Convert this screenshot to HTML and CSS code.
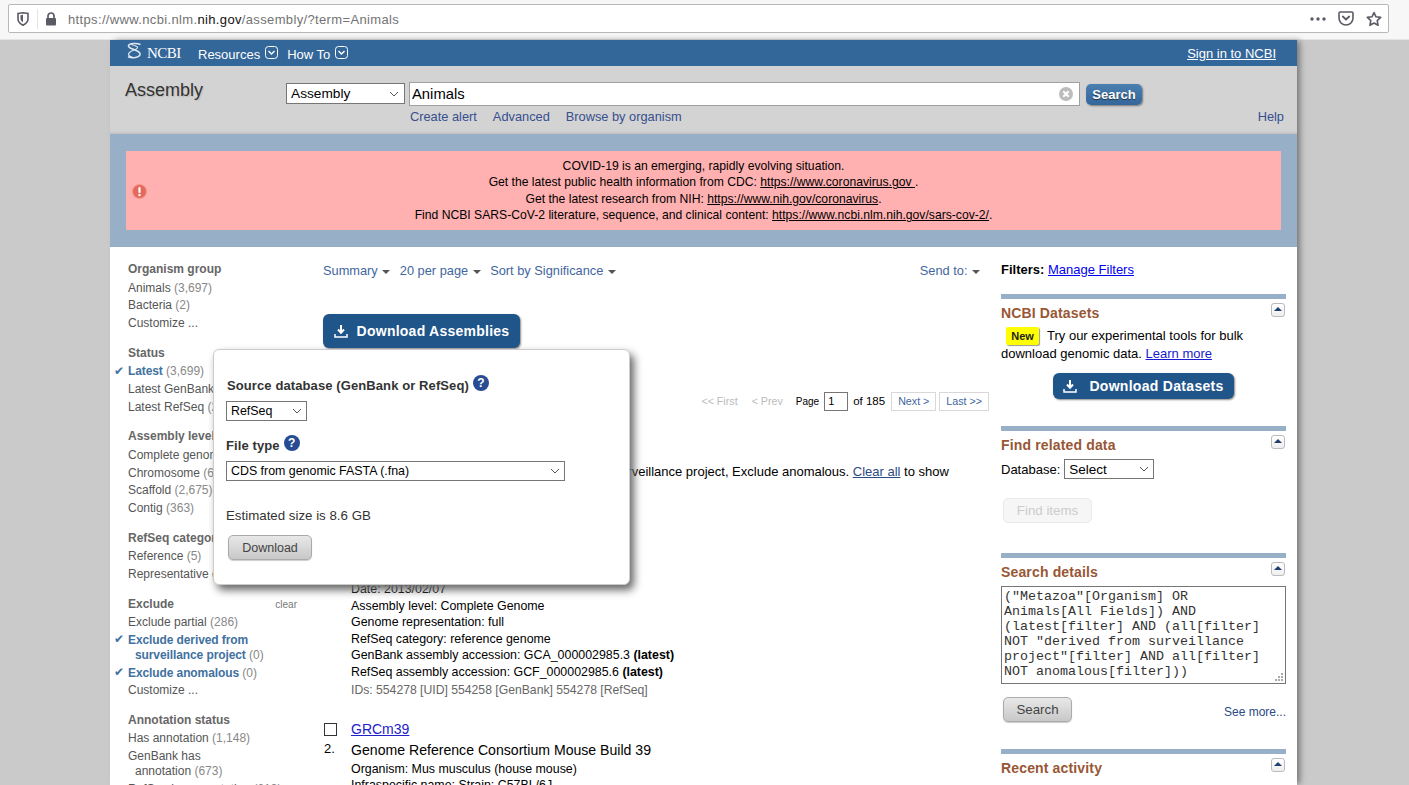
FILE: index.html
```html
<!DOCTYPE html>
<html lang="en">
<head>
    <meta charset="UTF-8">
    <meta name="viewport" content="width=device-width, initial-scale=1.0">
    <title>Assembly - NCBI</title>
    <link rel="stylesheet" href="styles.css">
</head>
<body>

    <!-- Browser chrome -->
    <div class="browser-bar">
        <div class="url-box">
            <svg class="shield" width="12" height="14" viewBox="0 0 12 14"><path d="M1 1.500 6 .8l5 .7v5.200c0 3.200-2.500 5.300-5 6.500C3.500 12 1 9.900 1 6.700z" fill="none" stroke="#5b5b66" stroke-width="1.600"/><path d="M3.500 3.200 6 2.800v7.400C4.500 9.400 3.500 8.200 3.500 6.500z" fill="#5b5b66"/></svg>
            <span class="url-sep"></span>
            <svg class="lock" width="12" height="14" viewBox="0 0 12 14"><path d="M3 6V4a3 3 0 0 1 6 0v2" fill="none" stroke="#5b5b66" stroke-width="1.700"/><rect x="1" y="6" width="10" height="7.500" rx="1" fill="#5b5b66"/></svg>
            <span class="url-text">https://www.ncbi.nlm.<b>nih.gov</b>/assembly/?term=Animals</span>
            <span class="url-actions">
                <svg width="16" height="4" viewBox="0 0 16 4"><circle cx="2" cy="2" r="1.700" fill="#5b5b66"/><circle cx="8" cy="2" r="1.700" fill="#5b5b66"/><circle cx="14" cy="2" r="1.700" fill="#5b5b66"/></svg>
                <svg width="16" height="15" viewBox="0 0 16 15"><path d="M1 2.200C1 1.500 1.500 1 2.200 1h11.600c.7 0 1.200.5 1.200 1.200V7a7 7 0 0 1-14 0z" fill="none" stroke="#5b5b66" stroke-width="1.600"/><path d="M4.800 5.500 8 8.500l3.200-3" fill="none" stroke="#5b5b66" stroke-width="1.800" stroke-linecap="round"/></svg>
                <svg width="16" height="16" viewBox="0 0 16 16"><path d="M8 1.500l2 4.300 4.700.6-3.500 3.200.9 4.700L8 12l-4.100 2.300.9-4.700-3.500-3.200 4.700-.6z" fill="none" stroke="#5b5b66" stroke-width="1.600" stroke-linejoin="round"/></svg>
            </span>
        </div>
    </div>

    <div class="page">

        <!-- NCBI top bar -->
        <header class="ncbi-bar">
            <a class="ncbi-logo" href="#">
                <svg width="17" height="19" viewBox="0 0 17 19"><path d="M14.500 2.500C11 .8 3.500 1 2.500 3.500c-.8 2.200 3.500 3.300 6 4.300 3 1.200 6.500 2.400 5.500 5-1 2.800-7.500 4-12 2" fill="none" stroke="#dfe8f2" stroke-width="1.500"/><path d="M5 2.500c2.500.7 6 1.500 6.500 2.700.4 1-1.500 2-3.500 2.800-2.500 1-6 2.400-5.500 4.700.3 1.300 2 2.200 4.500 2.800" fill="none" stroke="#dfe8f2" stroke-width="1.100"/></svg>
                <span>NCBI</span>
            </a>
            <a class="ncbi-menu" href="#"><span>Resources</span> <svg width="13" height="13" viewBox="0 0 13 13"><rect x=".5" y=".5" width="12" height="12" rx="3" fill="none" stroke="#fff"/><path d="M3.500 5 6.500 8l3-3" fill="none" stroke="#fff" stroke-width="1.400"/></svg></a>
            <a class="ncbi-menu" href="#"><span>How To</span> <svg width="13" height="13" viewBox="0 0 13 13"><rect x=".5" y=".5" width="12" height="12" rx="3" fill="none" stroke="#fff"/><path d="M3.500 5 6.500 8l3-3" fill="none" stroke="#fff" stroke-width="1.400"/></svg></a>
            <a class="sign-in" href="#">Sign in to NCBI</a>
        </header>

        <!-- Search bar -->
        <div class="search-bar">
            <div class="search-row">
                <div class="db-title">Assembly</div>
                <select class="db-select"><option>Assembly</option></select>
                <div class="term-box">
                    <input class="term-input" type="text" value="Animals">
                    <svg class="term-clear" width="14" height="14" viewBox="0 0 14 14"><circle cx="7" cy="7" r="7" fill="#bcbcbc"/><path d="M4.300 4.300l5.400 5.400M9.700 4.300l-5.400 5.400" stroke="#fff" stroke-width="2"/></svg>
                </div>
                <button class="search-button">Search</button>
            </div>
            <div class="search-links">
                <a href="#">Create alert</a>
                <a href="#">Advanced</a>
                <a href="#">Browse by organism</a>
                <a class="help-link" href="#">Help</a>
            </div>
        </div>

        <!-- COVID banner -->
        <div class="banner">
            <div class="alert">
                <svg class="alert-icon" width="15" height="15" viewBox="0 0 15 15"><circle cx="7.500" cy="7.500" r="7" fill="#e5685c" stroke="#f29a8e"/><rect x="6.400" y="3" width="2.200" height="6" rx="1" fill="#fff"/><circle cx="7.500" cy="11" r="1.200" fill="#fff"/></svg>
                <p>COVID-19 is an emerging, rapidly evolving situation.</p>
                <p>Get the latest public health information from CDC: <a href="#">https://www.coronavirus.gov </a>.</p>
                <p>Get the latest research from NIH: <a href="#">https://www.nih.gov/coronavirus</a>.</p>
                <p>Find NCBI SARS-CoV-2 literature, sequence, and clinical content: <a href="#">https://www.ncbi.nlm.nih.gov/sars-cov-2/</a>.</p>
            </div>
        </div>

        <main class="content">

            <!-- Left facets -->
            <aside class="facets">
                <div class="facet-group">
                    <h3>Organism group</h3>
                    <ul>
                        <li>Animals <span>(3,697)</span></li>
                        <li>Bacteria <span>(2)</span></li>
                        <li>Customize ...</li>
                    </ul>
                </div>
                <div class="facet-group">
                    <h3>Status</h3>
                    <ul>
                        <li class="on"><b>Latest</b> <span>(3,699)</span></li>
                        <li>Latest GenBank <span>(3,414)</span></li>
                        <li>Latest RefSeq <span>(285)</span></li>
                    </ul>
                </div>
                <div class="facet-group">
                    <h3>Assembly level</h3>
                    <ul>
                        <li>Complete genome <span>(30)</span></li>
                        <li>Chromosome <span>(631)</span></li>
                        <li>Scaffold <span>(2,675)</span></li>
                        <li>Contig <span>(363)</span></li>
                    </ul>
                </div>
                <div class="facet-group">
                    <h3>RefSeq category</h3>
                    <ul>
                        <li>Reference <span>(5)</span></li>
                        <li>Representative genome <span>(280)</span></li>
                    </ul>
                </div>
                <div class="facet-group">
                    <h3>Exclude <a class="facet-clear" href="#">clear</a></h3>
                    <ul>
                        <li>Exclude partial <span>(286)</span></li>
                        <li class="on wrap"><b>Exclude derived from<br>surveillance project</b> <span>(0)</span></li>
                        <li class="on"><b>Exclude anomalous</b> <span>(0)</span></li>
                        <li>Customize ...</li>
                    </ul>
                </div>
                <div class="facet-group">
                    <h3>Annotation status</h3>
                    <ul>
                        <li>Has annotation <span>(1,148)</span></li>
                        <li class="wrap">GenBank has<br>annotation <span>(673)</span></li>
                        <li>RefSeq has annotation <span>(213)</span></li>
                    </ul>
                </div>
            </aside>

            <!-- Results -->
            <section class="results">
                <div class="tool-row">
                    <a href="#">Summary <i class="caret"></i></a>
                    <a href="#">20 per page <i class="caret"></i></a>
                    <a href="#">Sort by Significance <i class="caret"></i></a>
                    <a class="send-to" href="#">Send to: <i class="caret"></i></a>
                </div>

                <button class="download-button big">
                    <svg width="14" height="14" viewBox="0 0 14 14"><path d="M7 1v7M4 5.500 7 8.800l3-3.300" fill="none" stroke="#fff" stroke-width="2"/><path d="M1 10v3h12v-3" fill="none" stroke="#fff" stroke-width="1.500"/></svg>
                    Download Assemblies
                </button>

                <div class="pager">
                    <span class="off">&lt;&lt; First</span>
                    <span class="off prev">&lt; Prev</span>
                    <span class="page-label">Page</span>
                    <input class="page-input" type="text" value="1">
                    <span class="page-count">of 185</span>
                    <a class="page-link" href="#">Next &gt;</a>
                    <a class="page-link" href="#">Last &gt;&gt;</a>
                </div>

                <p class="filter-msg">Filters activated: Latest, Exclude derived from surveillance project, Exclude anomalous. <a href="#">Clear all</a> to show 3,699 items.</p>

                <div class="result first">
                    <div class="result-num"><input type="checkbox"><span>1.</span></div>
                    <div class="result-body">
                        <a class="result-title" href="#">WBcel235</a>
                        <div class="result-desc">Genome assembly WBcel235</div>
                        <p>Organism: Caenorhabditis elegans</p>
                        <p>Submitter: C. elegans Sequencing Consortium</p>
                        <p>Date: 2013/02/07</p>
                        <p>Assembly level: Complete Genome</p>
                        <p>Genome representation: full</p>
                        <p>RefSeq category: reference genome</p>
                        <p>GenBank assembly accession: GCA_000002985.3 <b>(latest)</b></p>
                        <p>RefSeq assembly accession: GCF_000002985.6 <b>(latest)</b></p>
                        <p class="result-ids">IDs: 554278 [UID] 554258 [GenBank] 554278 [RefSeq]</p>
                    </div>
                </div>

                <div class="result">
                    <div class="result-num"><input type="checkbox"><span>2.</span></div>
                    <div class="result-body">
                        <a class="result-title" href="#">GRCm39</a>
                        <div class="result-desc">Genome Reference Consortium Mouse Build 39</div>
                        <p>Organism: Mus musculus (house mouse)</p>
                        <p>Infraspecific name: Strain: C57BL/6J</p>
                    </div>
                </div>

                <!-- Download popup -->
                <div class="popup">
                    <div class="popup-label first-label">Source database (GenBank or RefSeq) <i class="help-dot">?</i></div>
                    <select class="popup-select short"><option>RefSeq</option></select>
                    <div class="popup-label">File type <i class="help-dot">?</i></div>
                    <select class="popup-select wide"><option>CDS from genomic FASTA (.fna)</option></select>
                    <p class="popup-size">Estimated size is 8.6 GB</p>
                    <button class="gray-button popup-download">Download</button>
                </div>
            </section>

            <!-- Right column -->
            <aside class="sidebar">
                <div class="filters-line"><b>Filters:</b> <a href="#">Manage Filters</a></div>

                <div class="portlet">
                    <div class="portlet-head"><h2>NCBI Datasets</h2><span class="collapse"></span></div>
                    <p class="datasets-text"><span class="new-badge">New</span>Try our experimental tools for bulk download genomic data. <a href="#">Learn more</a></p>
                    <button class="download-button small">
                        <svg width="14" height="14" viewBox="0 0 14 14"><path d="M7 1v7M4 5.500 7 8.800l3-3.300" fill="none" stroke="#fff" stroke-width="2"/><path d="M1 10v3h12v-3" fill="none" stroke="#fff" stroke-width="1.500"/></svg>
                        Download Datasets
                    </button>
                </div>

                <div class="portlet related">
                    <div class="portlet-head"><h2>Find related data</h2><span class="collapse"></span></div>
                    <div class="db-row">Database: <select class="related-select"><option>Select</option></select></div>
                    <button class="find-items" disabled>Find items</button>
                </div>

                <div class="portlet details">
                    <div class="portlet-head"><h2>Search details</h2><span class="collapse"></span></div>
                    <textarea class="details-box" spellcheck="false">("Metazoa"[Organism] OR Animals[All Fields]) AND (latest[filter] AND (all[filter] NOT "derived from surveillance project"[filter] AND all[filter] NOT anomalous[filter]))</textarea>
                    <div class="details-foot">
                        <button class="gray-button details-search">Search</button>
                        <a href="#">See more...</a>
                    </div>
                </div>

                <div class="portlet recent">
                    <div class="portlet-head"><h2>Recent activity</h2><span class="collapse"></span></div>
                </div>
            </aside>
        </main>
    </div>

</body>
</html>
```

FILE: styles.css
```css
html, body {
    height: 785px;
    overflow: hidden;
}
body {
    margin: 0;
    background-color: #cacaca;
    font-family: "Liberation Sans", Arial, sans-serif;
    font-size: 12px;
    color: #000;
}
p, h2, h3, ul {
    margin: 0;
    padding: 0;
}
select {
    appearance: none;
    padding: 0 0 0 4px;
    font-family: inherit;
    color: #000;
    background-color: #fff;
    background-image: url("data:image/svg+xml,%3Csvg xmlns='http://www.w3.org/2000/svg' width='10' height='6'%3E%3Cpath d='M1 1l4 4 4-4' fill='none' stroke='%23555'/%3E%3C/svg%3E");
    background-repeat: no-repeat;
    background-position: right 4px center;
    border: 1px solid #767676;
    border-radius: 0;
}

/* browser chrome */
.browser-bar {
    height: 40px;
    box-sizing: border-box;
    padding: 4px 20px 0 8px;
    background-color: #f7f7f8;
    border-bottom: 1px solid #e4e4e4;
}
.url-box {
    display: flex;
    align-items: center;
    height: 29px;
    box-sizing: border-box;
    background-color: #fff;
    border: 1px solid #b8b8b8;
    border-radius: 2px;
}
.shield {
    margin-left: 8px;
}
.url-sep {
    width: 1px;
    height: 20px;
    margin: 0 7px 0 8px;
    background-color: #e4e4e4;
}
.url-text {
    margin-left: 11px;
    padding-top: 2px;
    font-size: 13px;
    letter-spacing: 0.35px;
    color: #737373;
}
.url-text b {
    font-weight: normal;
    color: #111;
}
.url-actions {
    margin-left: auto;
    display: flex;
    align-items: center;
    gap: 12px;
    padding-right: 6px;
}

/* page frame */
.page {
    width: 1187px;
    margin-left: 110px;
    height: 745px;
    background-color: #fff;
    box-shadow: 4px 0 6px -1px #777;
}
.ncbi-bar {
    display: flex;
    align-items: center;
    height: 26px;
    padding: 0 21px 0 16px;
    background-color: #336699;
    color: #fff;
    font-size: 13px;
}
.ncbi-bar a {
    color: #fff;
    text-decoration: none;
}
.ncbi-logo {
    display: flex;
    align-items: center;
    gap: 4px;
    width: 72px;
    font-family: "Liberation Serif", serif;
    font-size: 15px;
    letter-spacing: -0.5px;
}
.ncbi-logo svg {
    margin-top: -3px;
}
.ncbi-menu {
    display: flex;
    align-items: center;
    gap: 5px;
    margin-right: 9px;
}
.ncbi-menu span {
    padding-top: 2px;
}
.ncbi-menu svg {
    margin-top: -2px;
}
.ncbi-bar .sign-in {
    margin-left: auto;
    text-decoration: underline;
}

/* search bar */
.search-bar {
    height: 68px;
    box-sizing: border-box;
    padding: 16px 13px 0 15px;
    background-color: #d3d3d3;
    box-shadow: inset 0 -3px 3px -2px #bbb;
}
.search-row {
    display: flex;
    align-items: flex-start;
}
.db-title {
    width: 161px;
    font-size: 18px;
    line-height: 16px;
    color: #333;
    text-shadow: 1px 1px 1px #bbb;
}
.db-select {
    width: 119px;
    height: 21px;
    margin-top: 1px;
    font-size: 13.700px;
    background-position: right 5px center;
}
.term-box {
    position: relative;
    margin-left: 4px;
}
.term-input {
    display: block;
    width: 671px;
    height: 24px;
    box-sizing: border-box;
    padding: 0 24px 0 2px;
    font-family: inherit;
    font-size: 14.800px;
    border: 1px solid #a0a0a0;
}
.term-clear {
    position: absolute;
    right: 7px;
    top: 5px;
}
.search-button {
    width: 56px;
    height: 21px;
    margin: 2px 0 0 6px;
    padding: 0;
    font-family: inherit;
    font-size: 13px;
    font-weight: bold;
    color: #fff;
    background: linear-gradient(#4b7eb1, #336699);
    border: none;
    border-radius: 5px;
    box-shadow: 1px 1px 2px #777;
    text-shadow: 0 1px 1px #234;
}
.search-links {
    display: flex;
    gap: 16px;
    margin: 3px 0 0 285px;
    font-size: 12.800px;
    line-height: 16px;
}
.search-links a {
    color: #364f8f;
    text-decoration: none;
}
.search-links .help-link {
    margin-left: auto;
}

/* banner */
.banner {
    height: 113px;
    box-sizing: border-box;
    padding: 17px 16px 0;
    background-color: #97b0c8;
}
.alert {
    position: relative;
    height: 79px;
    box-sizing: border-box;
    padding-top: 7px;
    background-color: #ffb0b0;
    text-align: center;
    font-size: 12.160px;
    line-height: 16.400px;
}
.alert a {
    color: #000;
}
.alert-icon {
    position: absolute;
    left: 6px;
    top: 33px;
}

/* three columns */
.content {
    display: flex;
    height: 538px;
    overflow: hidden;
    padding: 13px 11px 0 18px;
}

/* left facets */
.facets {
    flex: none;
    width: 169px;
    margin-right: 26px;
}
.facet-group {
    margin-bottom: 11.100px;
}
.facet-group h3 {
    display: flex;
    justify-content: space-between;
    align-items: flex-end;
    margin-bottom: 0.700px;
    font-size: 12px;
    line-height: 18.500px;
    color: #666;
}
.facet-clear {
    font-size: 10px;
    font-weight: normal;
    color: #777;
    text-decoration: none;
    line-height: 16px;
}
.facet-group ul {
    list-style: none;
}
.facet-group li {
    position: relative;
    padding: 1.400px 0;
    line-height: 15px;
    white-space: nowrap;
    color: #555;
}
.facet-group li span {
    color: #888;
}
.facet-group li.wrap {
    padding-left: 7px;
    text-indent: -7px;
}
.facet-group li.on b {
    color: #41719f;
    letter-spacing: -0.100px;
}
.facet-group li.on::before {
    content: "\2714";
    position: absolute;
    left: -14px;
    top: 1px;
    font-family: "DejaVu Sans", sans-serif;
    font-size: 12px;
    color: #41719f;
    text-indent: 0;
}

/* results */
.results {
    position: relative;
    flex: none;
    width: 666px;
    margin-right: 12px;
    padding-top: 2px;
}
.tool-row {
    display: flex;
    gap: 9.500px;
    height: 18px;
    line-height: 18px;
    font-size: 12.800px;
}
.tool-row a {
    color: #3f66a0;
    text-decoration: none;
}
.tool-row .send-to {
    margin-left: auto;
    padding-right: 9px;
}
.caret {
    display: inline-block;
    margin-left: 1px;
    vertical-align: 1px;
    border-left: 4px solid transparent;
    border-right: 4px solid transparent;
    border-top: 4px solid #555;
}
.download-button {
    display: flex;
    align-items: center;
    justify-content: center;
    padding: 0;
    font-family: inherit;
    font-size: 14px;
    font-weight: bold;
    color: #fff;
    background-color: #20558a;
    border: none;
    border-radius: 6px;
    box-shadow: 1px 1px 2px #888;
}
.download-button.big {
    width: 197px;
    height: 34px;
    margin-top: 34px;
    gap: 9px;
    letter-spacing: 0.250px;
}
.download-button.small {
    width: 181px;
    height: 26px;
    margin: 11px auto 0 52px;
    gap: 12px;
    letter-spacing: 0.300px;
}
.pager {
    display: flex;
    align-items: center;
    justify-content: flex-end;
    height: 20px;
    margin-top: 43px;
    font-size: 10.700px;
}
.pager .off {
    color: #bbb;
}
.pager .prev {
    margin-left: 14px;
}
.page-label {
    margin-left: 13px;
    font-size: 10px;
}
.page-input {
    width: 24px;
    height: 19px;
    box-sizing: border-box;
    margin-left: 5px;
    padding: 0 3px;
    font-family: inherit;
    font-size: 11px;
    border: 1px solid #767676;
}
.page-count {
    margin-left: 5px;
    font-size: 11.500px;
}
.page-link {
    margin-left: 6px;
    padding: 0 6px;
    height: 17px;
    line-height: 17px;
    color: #3f66a0;
    text-decoration: none;
    border: 1px solid #d8d8d8;
}
.page-link:last-child {
    margin-left: 3px;
}
.filter-msg {
    margin-top: 53px;
    padding: 0 30px 0 24px;
    line-height: 16px;
    font-size: 13px;
}
.filter-msg a {
    color: #2c4a84;
}
.result {
    display: flex;
    margin-top: 20px;
}
.result.first {
    margin-top: 10px;
}
.result-num {
    flex: none;
    width: 28px;
    padding-top: 4px;
}
.result-num input {
    appearance: none;
    display: block;
    width: 13px;
    height: 13px;
    margin: 0 0 5px 1px;
    background-color: #fff;
    border: 1px solid #333;
    border-radius: 0;
}
.result-num span {
    padding-left: 1px;
    font-size: 13px;
}
.result-title {
    display: block;
    font-size: 14px;
    line-height: 20px;
    color: #2222cc;
}
.result-desc {
    font-size: 14.100px;
    line-height: 22px;
}
.result-body p {
    font-size: 12.400px;
    line-height: 16.500px;
}
.result-body .result-ids {
    margin-top: 2px;
    font-size: 12.200px;
    color: #666;
}

/* download popup */
.popup {
    position: absolute;
    left: -110px;
    top: 89px;
    width: 417px;
    height: 236px;
    box-sizing: border-box;
    padding: 0 12px;
    background-color: #fff;
    border: 1px solid #ccc;
    border-radius: 6px;
    box-shadow: 4px 5px 8px #666;
    z-index: 2;
}
.popup-label {
    display: flex;
    align-items: center;
    gap: 4px;
    font-size: 13px;
    letter-spacing: 0.100px;
    font-weight: bold;
    color: #333;
    height: 20px;
    margin-top: 14px;
}
.first-label {
    margin-top: 25px;
    padding-left: 1px;
}
.help-dot {
    display: inline-block;
    width: 16px;
    height: 16px;
    margin-top: -4px;
    border-radius: 50%;
    background-color: #274c92;
    color: #fff;
    font-style: normal;
    font-size: 12px;
    font-weight: bold;
    line-height: 16px;
    text-align: center;
}
.popup-select {
    display: block;
    height: 20px;
    margin-top: 6px;
    font-size: 12.400px;
}
.popup-select.short {
    width: 81px;
}
.popup-select.wide {
    width: 339px;
}
.popup-size {
    margin-top: 28px;
    font-size: 13.300px;
    line-height: 14px;
    color: #333;
}
.gray-button {
    padding: 0;
    font-family: inherit;
    font-size: 13.300px;
    color: #444;
    background: linear-gradient(#e8e8e8, #c8c8c8);
    border: 1px solid #aaa;
    border-radius: 5px;
    box-shadow: 0 1px 1px #ccc;
}
.popup-download {
    display: block;
    width: 84px;
    height: 25px;
    margin: 12px 0 0 2px;
    font-size: 12.500px;
}

/* right column */
.sidebar {
    flex: none;
    width: 285px;
    padding-top: 2px;
    font-size: 13px;
}
.filters-line {
    line-height: 16px;
}
.portlet {
    margin-top: 27px;
    border-top: 5px solid #97b0c8;
}
.filters-line + .portlet {
    margin-top: 16px;
}
.portlet-head {
    display: flex;
    justify-content: space-between;
    align-items: flex-start;
    padding: 4px 1px 0 0;
}
.portlet-head h2 {
    font-size: 14px;
    letter-spacing: 0.150px;
    line-height: 20px;
    color: #985735;
}
.collapse {
    position: relative;
    width: 14px;
    height: 14px;
    box-sizing: border-box;
    background: linear-gradient(#fff, #eee);
    border: 1px solid #bbb;
    border-radius: 3px;
}
.collapse::after {
    content: "";
    position: absolute;
    left: 2px;
    top: 3px;
    border-left: 4px solid transparent;
    border-right: 4px solid transparent;
    border-bottom: 4px solid #1f3f6e;
}
.datasets-text {
    margin-top: 4px;
    line-height: 17.500px;
}
.datasets-text a {
    color: #1a1ad0;
}
.new-badge {
    display: inline-block;
    vertical-align: top;
    height: 18px;
    width: 33px;
    margin: 0 8px -1px 5px;
    background-color: #ffff00;
    border-radius: 2px;
    box-shadow: 1px 1px 1px #999;
    font-size: 11px;
    font-weight: bold;
    line-height: 18px;
    text-align: center;
    color: #222;
}
.db-row {
    display: flex;
    align-items: center;
    gap: 4px;
    margin-top: 4px;
    height: 20px;
}
.related-select {
    width: 90px;
    height: 20px;
    font-size: 13.500px;
}
.find-items {
    display: block;
    width: 89px;
    height: 25px;
    margin: 19px 0 0 2px;
    padding: 0;
    font-family: inherit;
    font-size: 13.300px;
    color: #ccc;
    background-color: #f6f6f6;
    border: 1px solid #eaeaea;
    border-radius: 5px;
}
.details {
    margin-top: 30px;
}
.details-box {
    display: block;
    width: 285px;
    height: 98px;
    box-sizing: border-box;
    margin-top: 4px;
    padding: 2px;
    font-family: "Liberation Mono", monospace;
    font-size: 13.330px;
    line-height: 15px;
    color: #333;
    border: 1px solid #767676;
    overflow: hidden;
}
.details-box::-webkit-resizer {
    background-image: url("data:image/svg+xml,%3Csvg xmlns='http://www.w3.org/2000/svg' width='15' height='15' fill='%23aaa'%3E%3Cpath d='M11 5h2v2h-2zM8 8h2v2H8zM11 8h2v2h-2zM5 11h2v2H5zM8 11h2v2H8zM11 11h2v2h-2z'/%3E%3C/svg%3E");
}
.details-foot {
    display: flex;
    justify-content: space-between;
    align-items: flex-end;
    margin-top: 13px;
    padding-left: 2px;
}
.details-foot a {
    margin-bottom: 3px;
    font-size: 12px;
    color: #2c4a84;
    text-decoration: none;
}
.details-search {
    width: 69px;
    height: 25px;
}
```
